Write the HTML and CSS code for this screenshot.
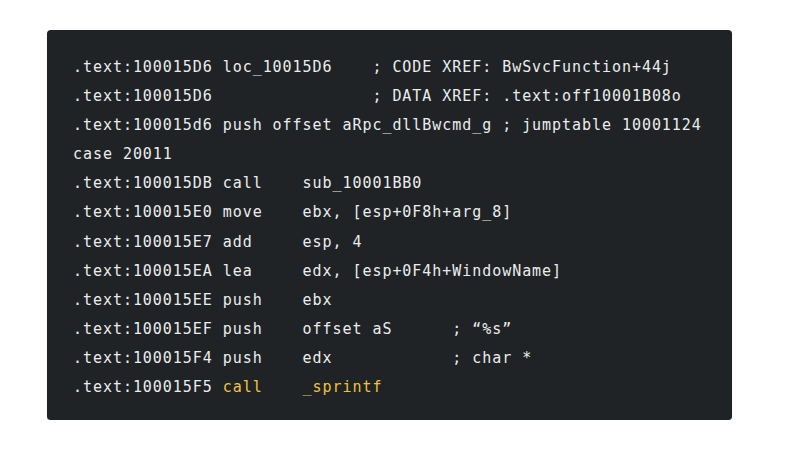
FILE: index.html
```html
<!DOCTYPE html>
<html>
<head>
<meta charset="utf-8">
<link rel="stylesheet" href="styles.css">
</head>
<body>
<div class="page">
<pre class="code"><span class="ln">.text:100015D6 loc_10015D6    ; CODE XREF: BwSvcFunction+44j</span>
<span class="ln">.text:100015D6                ; DATA XREF: .text:off10001B08o</span>
<span class="ln">.text:100015d6 push offset aRpc_dllBwcmd_g ; jumptable 10001124</span>
<span class="ln">case 20011</span>
<span class="ln">.text:100015DB call    sub_10001BB0</span>
<span class="ln">.text:100015E0 move    ebx, [esp+0F8h+arg_8]</span>
<span class="ln">.text:100015E7 add     esp, 4</span>
<span class="ln">.text:100015EA lea     edx, [esp+0F4h+WindowName]</span>
<span class="ln">.text:100015EE push    ebx</span>
<span class="ln">.text:100015EF push    offset aS      ; “%s”</span>
<span class="ln">.text:100015F4 push    edx            ; char *</span>
<span class="ln">.text:100015F5 <span class="hl">call    _sprintf</span></span></pre>
</div>
</body>
</html>
```
FILE: styles.css
```css
html, body {
  margin: 0;
  padding: 0;
  background: #ffffff;
}
.page {
  padding: 30px 0 0 47px;
}
.code {
  margin: 0;
  width: 685px;
  box-sizing: border-box;
  padding: 23px 26px 18px 26px;
  background: #1f2326;
  border-radius: 4px;
  box-shadow: 0 1px 1px rgba(0, 0, 0, 0.25);
  color: #ececec;
  font-family: "DejaVu Sans Mono", monospace;
  font-size: 15px;
  letter-spacing: 0.95px;
  line-height: 29.1px;
  white-space: pre;
}
.hl {
  color: #f0c23c;
}
```
